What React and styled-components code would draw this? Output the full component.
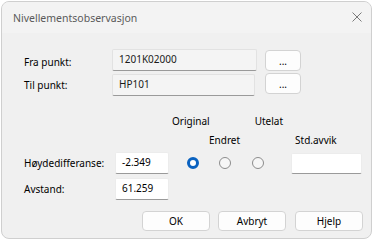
import React from "react";
import styled, { createGlobalStyle } from "styled-components";

const Global = createGlobalStyle`
  html, body { margin: 0; padding: 0; background: #ffffff; }
  body { font-family: "Noto Sans", "Open Sans", sans-serif; }
  #root { padding: 1px 1px 0 1px; }
`;

const Window = styled.div`
  width: 369px;
  height: 236px;
  border: 1px solid #cfcfcf;
  border-radius: 8px;
  background: #f0f0f0;
  overflow: hidden;
  display: flex;
  flex-direction: column;
  color: #000;
  font-size: 10px;
`;

const TitleBar = styled.div`
  height: 31px;
  background: #f3f3f3;
  display: flex;
  align-items: center;
  justify-content: space-between;
  padding: 0 9px 0 11px;
  flex-shrink: 0;
`;

const Title = styled.span`
  font-size: 10.5px;
  color: #5a5a5a;
`;

const Close = styled.div`
  width: 10px;
  height: 10px;
  display: flex;
  margin-bottom: 1px;
`;

const Body = styled.div`
  display: flex;
  flex-direction: column;
  padding: 16px 8px 0 22px;
`;

const Row = styled.div`
  display: flex;
  align-items: ${(p) => p.$align || "center"};
  margin-top: ${(p) => p.$mt || 0}px;
  height: ${(p) => p.$h || 22}px;
`;

const Label = styled.span`
  width: ${(p) => p.$w}px;
  flex-shrink: 0;
  line-height: 14px;
  padding-top: ${(p) => p.$pt || 0}px;
`;

const ReadOnlyField = styled.div`
  box-sizing: border-box;
  width: ${(p) => p.$w}px;
  height: 22px;
  background: #f4f4f4;
  border: 1px solid #e2e2e2;
  border-bottom: 1px solid #9a9a9a;
  border-radius: 2px;
  padding: 2px 6px 0;
  line-height: 14px;
  color: #1a1a1a;
`;

const Input = styled.div`
  box-sizing: border-box;
  width: ${(p) => p.$w}px;
  height: ${(p) => p.$hh || 22}px;
  background: #ffffff;
  border: 1px solid #ececec;
  border-bottom: 1px solid #9a9a9a;
  border-radius: 2px;
  padding: 2px 6px 0;
  line-height: 14px;
  margin-left: ${(p) => p.$ml || 0}px;
`;

const Button = styled.div`
  box-sizing: border-box;
  width: ${(p) => p.$w || 68}px;
  height: ${(p) => p.$hh || 20}px;
  background: #fdfdfd;
  border: 1px solid #d3d3d3;
  border-radius: 4px;
  display: flex;
  align-items: center;
  justify-content: center;
  margin-left: ${(p) => p.$ml || 0}px;
  margin-top: ${(p) => p.$mt || 0}px;
  color: #000;
`;

const Header = styled.div`
  display: flex;
  height: ${(p) => p.$h}px;
  align-items: center;
  margin-top: ${(p) => p.$mt || 0}px;
`;

const HeaderText = styled.span`
  margin-left: ${(p) => p.$ml}px;
  line-height: 14px;
`;

const Radio = styled.div`
  box-sizing: border-box;
  width: 12px;
  height: 12px;
  border-radius: 50%;
  margin-left: ${(p) => p.$ml}px;
  flex-shrink: 0;
  ${(p) =>
    p.$checked
      ? `background: #ffffff; border: 3.5px solid #0a62c0;`
      : `background: #f6f6f6; border: 1px solid #8c8c8c;`}
`;

const Footer = styled.div`
  display: flex;
  justify-content: flex-end;
  margin-top: 11px;
`;

export default function App() {
  return (
    <>
      <Global />
      <Window>
        <TitleBar>
          <Title>Nivellementsobservasjon</Title>
          <Close>
            <svg width="10" height="10" viewBox="0 0 10 10">
              <path d="M0.5 0.5 L9.5 9.5 M9.5 0.5 L0.5 9.5" stroke="#7a7a7a" strokeWidth="1" fill="none" />
            </svg>
          </Close>
        </TitleBar>
        <Body>
          <Row $align="flex-start">
            <Label $w={88} $pt={6}>Fra punkt:</Label>
            <ReadOnlyField $w={145}>1201K02000</ReadOnlyField>
            <Button $w={36} $hh={21} $ml={8} $mt={1}>...</Button>
          </Row>
          <Row $align="flex-start" $mt={3}>
            <Label $w={88} $pt={4}>Til punkt:</Label>
            <ReadOnlyField $w={143}>HP101</ReadOnlyField>
            <Button $w={36} $hh={21} $ml={10} $mt={-1}>...</Button>
          </Row>
          <Header $h={14} $mt={18}>
            <HeaderText $ml={148}>Original</HeaderText>
            <HeaderText $ml={45}>Utelat</HeaderText>
          </Header>
          <Header $h={14} $mt={5}>
            <HeaderText $ml={185}>Endret</HeaderText>
            <HeaderText $ml={55}>Std.avvik</HeaderText>
          </Header>
          <Row $mt={5}>
            <Label $w={91}>Høydedifferanse:</Label>
            <Input $w={54}>-2.349</Input>
            <Radio $checked $ml={18} />
            <Radio $ml={20} />
            <Radio $ml={21} />
            <Input $w={71} $hh={21} $ml={27} />
          </Row>
          <Row $mt={4}>
            <Label $w={91}>Avstand:</Label>
            <Input $w={54}>61.259</Input>
          </Row>
          <Footer>
            <Button>OK</Button>
            <Button $ml={8}>Avbryt</Button>
            <Button $ml={9}>Hjelp</Button>
          </Footer>
        </Body>
      </Window>
    </>
  );
}
